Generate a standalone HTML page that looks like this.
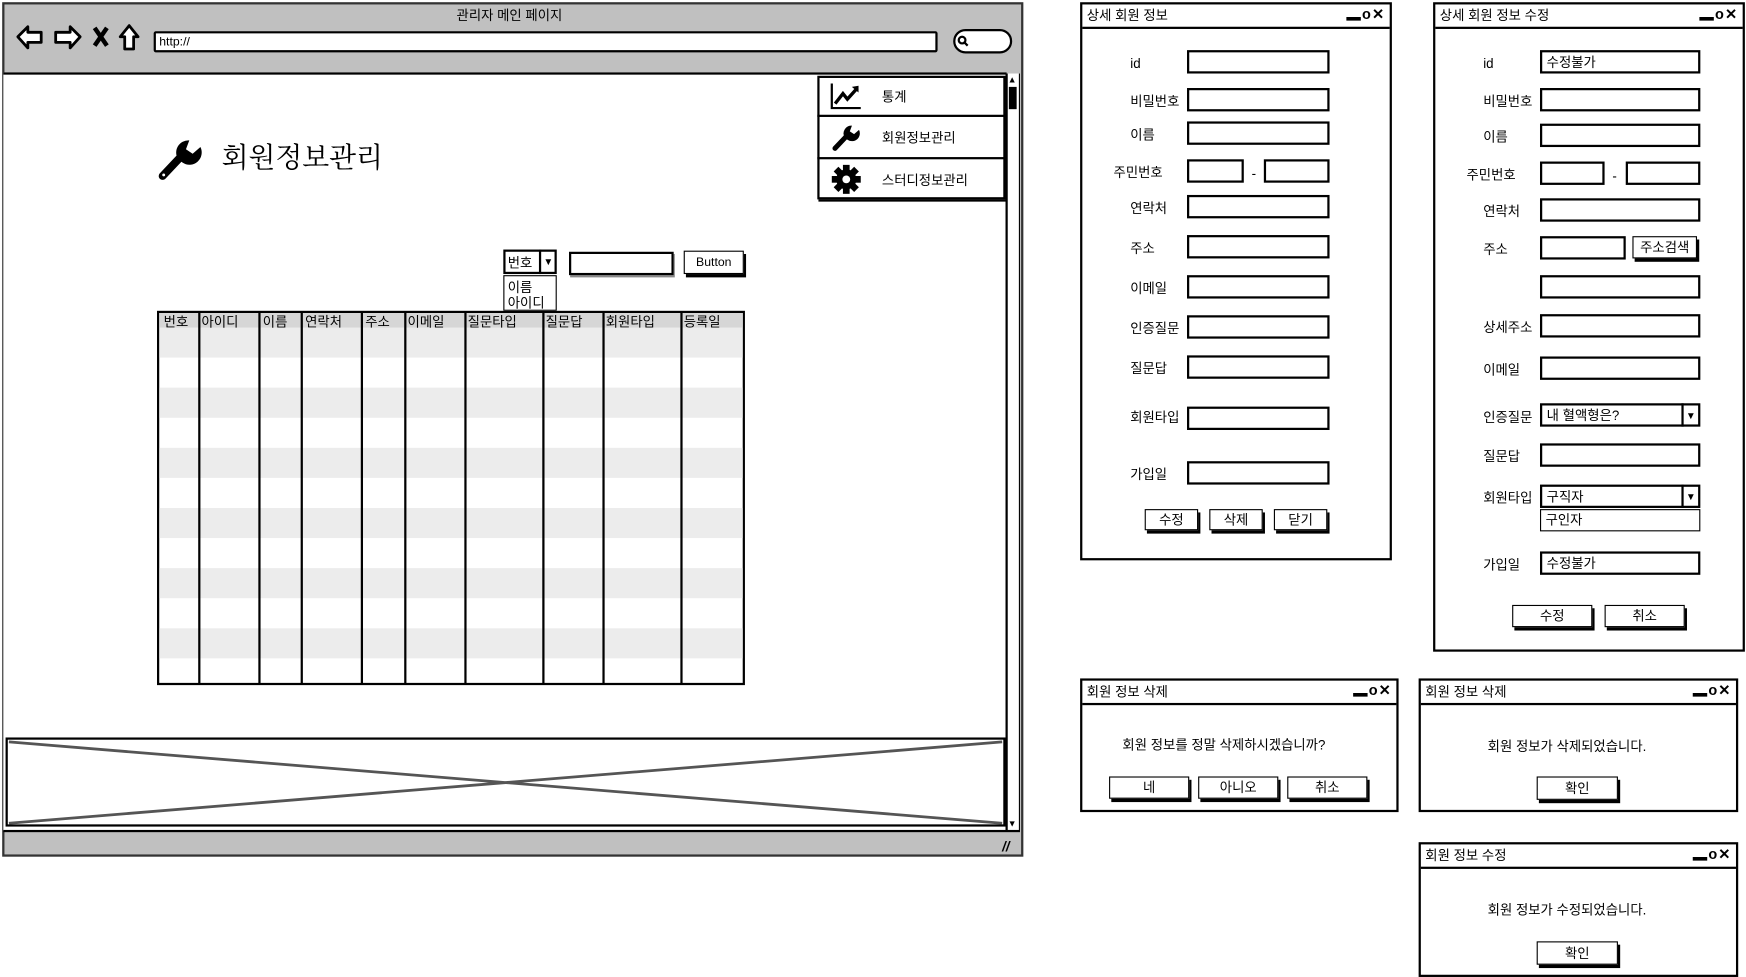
<!DOCTYPE html>
<html><head><meta charset="utf-8">
<style>
html,body{margin:0;padding:0;background:#fff;overflow:hidden;width:1746px;height:977px}
#r{position:absolute;left:0;top:0;width:1568px;height:877px;transform:scale(1.11352,1.114);transform-origin:0 0;font-family:"Liberation Sans","Noto Sans CJK KR",sans-serif;font-size:12px;color:#000}
.a{position:absolute;box-sizing:border-box}
.bx{position:absolute;box-sizing:border-box;border:2px solid #000;background:#fff}
.t{position:absolute;white-space:nowrap;line-height:1;margin-top:2px}
.btn{position:absolute;box-sizing:border-box;border:1.5px solid #000;background:#fff;box-shadow:2px 3px 0 #000;text-align:center;font-size:12px;padding-top:1px}
.dlg{position:absolute;box-sizing:border-box;border:2px solid #000;background:#fff}
.dlg .hd{position:absolute;left:0;right:0;top:0;height:20px;border-bottom:2px solid #000;font-size:12px;line-height:20px;padding-left:4px}
.ctl{position:absolute;right:4px;top:0;font-weight:bold;font-size:13px;line-height:18px;letter-spacing:1px}
.lb{position:absolute;font-size:12px;line-height:1;white-space:nowrap;margin-top:2px}
.in{position:absolute;box-sizing:border-box;border:2px solid #000;background:#fff;height:21px;font-size:12px;line-height:19px;padding-left:4px}
</style></head><body><div id="r">

<div class="a" style="left:2px;top:2px;width:917px;height:767px;border:2px solid #333;background:#c0c0c0"></div>
<div class="t" style="left:410px;top:6px;font-size:12px">관리자 메인 페이지</div>
<svg class="a" style="left:12px;top:20px" width="120" height="28" viewBox="0 0 120 28">
<path d="M4 13 L13 4 L13 9 L25 9 L25 18 L13 18 L13 23 Z" fill="#fff" stroke="#000" stroke-width="2.5" stroke-linejoin="round"/>
<path d="M60 13 L51 4 L51 9 L38 9 L38 18 L51 18 L51 23 Z" fill="#fff" stroke="#000" stroke-width="2.5" stroke-linejoin="round"/>
<path d="M73 5 L84 21 M84 5 L73 21" stroke="#000" stroke-width="4"/>
<path d="M104 3 L96 13 L100 13 L100 24 L108 24 L108 13 L112 13 Z" fill="#fff" stroke="#000" stroke-width="2.5" stroke-linejoin="round"/>
</svg>
<div class="a" style="left:138px;top:28px;width:704px;height:19px;border:2px solid #000;background:#fff;border-radius:2px"></div>
<div class="t" style="left:143px;top:31px;font-size:11px">http://</div>
<div class="a" style="left:856px;top:26px;width:53px;height:22px;border:2px solid #000;background:#fff;border-radius:11px"></div>
<svg class="a" style="left:859px;top:31px" width="12" height="12"><circle cx="5" cy="5" r="3" fill="none" stroke="#000" stroke-width="2"/><path d="M7 7 L10 10" stroke="#000" stroke-width="2"/></svg>
<div class="a" style="left:3px;top:65px;width:901px;height:681px;background:#fff;border-top:2px solid #000"></div>
<div class="a" style="left:903px;top:66px;width:13px;height:680px;background:#fff;border-left:2px solid #000;border-right:1px solid #000"></div>
<div class="a" style="left:906px;top:78px;width:7px;height:20px;background:#000"></div>
<div class="t" style="left:905px;top:66px;font-size:8px">▲</div>
<div class="t" style="left:905px;top:734px;font-size:8px">▼</div>
<div class="a" style="left:3px;top:745px;width:913px;height:2px;background:#000"></div>
<div class="t" style="left:900px;top:752px;font-size:12px;font-weight:bold;font-style:italic">//</div>

<div class="a" style="left:734px;top:68px;width:169px;height:111px;border:2px solid #000;background:#fff;box-shadow:1px 2px 0 #000"></div>
<div class="a" style="left:734px;top:103px;width:169px;height:2px;background:#000"></div>
<div class="a" style="left:734px;top:141px;width:169px;height:2px;background:#000"></div>
<svg class="a" style="left:745px;top:73px" width="30" height="26"><path d="M2 2 L2 24 L28 24" fill="none" stroke="#000" stroke-width="2"/><path d="M5 20 L12 11 L16 16 L25 6" fill="none" stroke="#000" stroke-width="3"/><path d="M20 5 L26 4 L26 10 Z" fill="#000"/></svg>
<div class="t" style="left:792px;top:79px">통계</div>
<svg class="a" style="left:745px;top:109px" width="30" height="28" viewBox="0 0 44 44"><path d="M6 38 L24 19" stroke="#000" stroke-width="7" stroke-linecap="round"/><path d="M20 23 A11 11 0 0 1 30 6 L27 14 L33 18 L40 12 A11 11 0 0 1 24 26 Z" fill="#000"/></svg>
<div class="t" style="left:792px;top:116px">회원정보관리</div>
<svg class="a" style="left:746px;top:147px" width="28" height="28" viewBox="0 0 28 28"><g fill="#000"><circle cx="14" cy="14" r="9"/><rect x="11" y="1" width="6" height="26"/><rect x="1" y="11" width="26" height="6"/><rect x="11" y="1" width="6" height="26" transform="rotate(45 14 14)"/><rect x="11" y="1" width="6" height="26" transform="rotate(-45 14 14)"/></g><circle cx="14" cy="14" r="3.5" fill="#fff"/></svg>
<div class="t" style="left:792px;top:154px">스터디정보관리</div>

<svg class="a" style="left:140px;top:120px" width="44" height="44" viewBox="0 0 44 44"><path d="M6 38 L24 19" stroke="#000" stroke-width="7" stroke-linecap="round"/><path d="M20 23 A11 11 0 0 1 30 6 L27 14 L33 18 L40 12 A11 11 0 0 1 24 26 Z" fill="#000"/><circle cx="7" cy="37" r="1.3" fill="#fff"/></svg>
<div class="t" style="left:199px;top:126px;font-size:25px;font-family:'Noto Serif CJK SC','Liberation Serif',serif">회원정보관리</div>

<div class="bx" style="left:452px;top:224px;width:48px;height:22px"></div>
<div class="a" style="left:484px;top:224px;width:2px;height:22px;background:#000"></div>
<div class="t" style="left:456px;top:228px">번호</div>
<div class="t" style="left:488px;top:229px;font-size:9px">▼</div>
<div class="bx" style="left:452px;top:247px;width:48px;height:32px;border-width:1.5px"></div>
<div class="t" style="left:456px;top:250px">이름</div>
<div class="t" style="left:456px;top:264px">아이디</div>
<div class="bx" style="left:511px;top:226px;width:94px;height:21px;box-shadow:1px 2px 0 #888"></div>
<div class="btn" style="left:614px;top:225px;width:54px;height:21px;line-height:18px;font-size:11px">Button</div>

<div class="a" style="left:141px;top:279px;width:528px;height:336px;border:2px solid #000;background:#fff;overflow:hidden">
<div class="a" style="left:0;top:0;width:530px;height:40px;background:#ececec"></div>
<div class="a" style="left:0;top:0;width:530px;height:13px;background:#d6d6d6"></div>
<div class="a" style="left:0;top:67px;width:530px;height:27px;background:#ececec"></div>
<div class="a" style="left:0;top:121px;width:530px;height:27px;background:#ececec"></div>
<div class="a" style="left:0;top:175px;width:530px;height:27px;background:#ececec"></div>
<div class="a" style="left:0;top:229px;width:530px;height:27px;background:#ececec"></div>
<div class="a" style="left:0;top:283px;width:530px;height:27px;background:#ececec"></div>
</div>
<div class="a" style="left:178px;top:280px;width:1.5px;height:334px;background:#000"></div>
<div class="a" style="left:232px;top:280px;width:1.5px;height:334px;background:#000"></div>
<div class="a" style="left:270px;top:280px;width:1.5px;height:334px;background:#000"></div>
<div class="a" style="left:324px;top:280px;width:1.5px;height:334px;background:#000"></div>
<div class="a" style="left:363px;top:280px;width:1.5px;height:334px;background:#000"></div>
<div class="a" style="left:417px;top:280px;width:1.5px;height:334px;background:#000"></div>
<div class="a" style="left:487px;top:280px;width:1.5px;height:334px;background:#000"></div>
<div class="a" style="left:541px;top:280px;width:1.5px;height:334px;background:#000"></div>
<div class="a" style="left:611px;top:280px;width:1.5px;height:334px;background:#000"></div>
<div class="t" style="left:147px;top:281px">번호</div>
<div class="t" style="left:181px;top:281px">아이디</div>
<div class="t" style="left:236px;top:281px">이름</div>
<div class="t" style="left:274px;top:281px">연락처</div>
<div class="t" style="left:328px;top:281px">주소</div>
<div class="t" style="left:366px;top:281px">이메일</div>
<div class="t" style="left:420px;top:281px">질문타입</div>
<div class="t" style="left:490px;top:281px">질문답</div>
<div class="t" style="left:544px;top:281px">회원타입</div>
<div class="t" style="left:614px;top:281px">등록일</div>

<div class="a" style="left:5px;top:662px;width:898px;height:80px;border:2px solid #000;background:#fff"></div>
<svg class="a" style="left:5px;top:662px" width="898" height="80"><path d="M3 4 L895 77 M3 77 L895 4" stroke="#555" stroke-width="2.5"/></svg>

<div class="dlg" style="left:970px;top:2px;width:280px;height:501px">
<div class="hd">상세 회원 정보<span class="ctl">▂ᴏ✕</span></div></div>
<div class="lb" style="left:1015px;top:49px">id</div>
<div class="in" style="left:1066px;top:45px;width:128px"></div>
<div class="lb" style="left:1015px;top:83px">비밀번호</div>
<div class="in" style="left:1066px;top:79px;width:128px"></div>
<div class="lb" style="left:1015px;top:113px">이름</div>
<div class="in" style="left:1066px;top:109px;width:128px"></div>
<div class="lb" style="left:1000px;top:147px">주민번호</div>
<div class="in" style="left:1066px;top:143px;width:51px"></div>
<div class="lb" style="left:1124px;top:148px">-</div>
<div class="in" style="left:1135px;top:143px;width:59px"></div>
<div class="lb" style="left:1015px;top:179px">연락처</div>
<div class="in" style="left:1066px;top:175px;width:128px"></div>
<div class="lb" style="left:1015px;top:215px">주소</div>
<div class="in" style="left:1066px;top:211px;width:128px"></div>
<div class="lb" style="left:1015px;top:251px">이메일</div>
<div class="in" style="left:1066px;top:247px;width:128px"></div>
<div class="lb" style="left:1015px;top:287px">인증질문</div>
<div class="in" style="left:1066px;top:283px;width:128px"></div>
<div class="lb" style="left:1015px;top:323px">질문답</div>
<div class="in" style="left:1066px;top:319px;width:128px"></div>
<div class="lb" style="left:1015px;top:367px">회원타입</div>
<div class="in" style="left:1066px;top:365px;width:128px"></div>
<div class="lb" style="left:1015px;top:418px">가입일</div>
<div class="in" style="left:1066px;top:414px;width:128px"></div>
<div class="btn" style="left:1028px;top:457px;width:48px;height:19px;line-height:16px">수정</div>
<div class="btn" style="left:1086px;top:457px;width:48px;height:19px;line-height:16px">삭제</div>
<div class="btn" style="left:1144px;top:457px;width:48px;height:19px;line-height:16px">닫기</div>

<div class="dlg" style="left:1287px;top:2px;width:280px;height:583px">
<div class="hd">상세 회원 정보 수정<span class="ctl">▂ᴏ✕</span></div></div>
<div class="lb" style="left:1332px;top:49px">id</div>
<div class="in" style="left:1383px;top:45px;width:144px">수정불가</div>
<div class="lb" style="left:1332px;top:83px">비밀번호</div>
<div class="in" style="left:1383px;top:79px;width:144px"></div>
<div class="lb" style="left:1332px;top:115px">이름</div>
<div class="in" style="left:1383px;top:111px;width:144px"></div>
<div class="lb" style="left:1317px;top:149px">주민번호</div>
<div class="in" style="left:1383px;top:145px;width:58px"></div>
<div class="lb" style="left:1448px;top:150px">-</div>
<div class="in" style="left:1460px;top:145px;width:67px"></div>
<div class="lb" style="left:1332px;top:182px">연락처</div>
<div class="in" style="left:1383px;top:178px;width:144px"></div>
<div class="lb" style="left:1332px;top:216px">주소</div>
<div class="in" style="left:1383px;top:212px;width:77px"></div>
<div class="btn" style="left:1466px;top:212px;width:58px;height:20px;line-height:17px">주소검색</div>
<div class="in" style="left:1383px;top:247px;width:144px"></div>
<div class="lb" style="left:1332px;top:286px">상세주소</div>
<div class="in" style="left:1383px;top:282px;width:144px"></div>
<div class="lb" style="left:1332px;top:324px">이메일</div>
<div class="in" style="left:1383px;top:320px;width:144px"></div>
<div class="lb" style="left:1332px;top:367px">인증질문</div>
<div class="in" style="left:1383px;top:362px;width:144px">내 혈액형은?</div>
<div class="a" style="left:1510px;top:362px;width:2px;height:21px;background:#000"></div>
<div class="t" style="left:1514px;top:367px;font-size:9px">▼</div>
<div class="lb" style="left:1332px;top:402px">질문답</div>
<div class="in" style="left:1383px;top:398px;width:144px"></div>
<div class="lb" style="left:1332px;top:439px">회원타입</div>
<div class="in" style="left:1383px;top:435px;width:144px">구직자</div>
<div class="a" style="left:1510px;top:435px;width:2px;height:21px;background:#000"></div>
<div class="t" style="left:1514px;top:440px;font-size:9px">▼</div>
<div class="in" style="left:1383px;top:457px;width:144px;height:20px;border-width:1.5px;line-height:18px">구인자</div>
<div class="lb" style="left:1332px;top:499px">가입일</div>
<div class="in" style="left:1383px;top:495px;width:144px">수정불가</div>
<div class="btn" style="left:1358px;top:543px;width:72px;height:20px;line-height:17px">수정</div>
<div class="btn" style="left:1441px;top:543px;width:72px;height:20px;line-height:17px">취소</div>

<div class="dlg" style="left:970px;top:609px;width:286px;height:120px">
<div class="hd">회원 정보 삭제<span class="ctl">▂ᴏ✕</span></div></div>
<div class="t" style="left:1008px;top:661px">회원 정보를 정말 삭제하시겠습니까?</div>
<div class="btn" style="left:996px;top:697px;width:72px;height:20px;line-height:17px">네</div>
<div class="btn" style="left:1076px;top:697px;width:72px;height:20px;line-height:17px">아니오</div>
<div class="btn" style="left:1156px;top:697px;width:72px;height:20px;line-height:17px">취소</div>

<div class="dlg" style="left:1274px;top:609px;width:287px;height:120px">
<div class="hd">회원 정보 삭제<span class="ctl">▂ᴏ✕</span></div></div>
<div class="t" style="left:1336px;top:662px">회원 정보가 삭제되었습니다.</div>
<div class="btn" style="left:1380px;top:697px;width:73px;height:21px;line-height:18px">확인</div>

<div class="dlg" style="left:1274px;top:756px;width:287px;height:121px">
<div class="hd">회원 정보 수정<span class="ctl">▂ᴏ✕</span></div></div>
<div class="t" style="left:1336px;top:809px">회원 정보가 수정되었습니다.</div>
<div class="btn" style="left:1380px;top:845px;width:73px;height:21px;line-height:18px">확인</div>

</div></body></html>
